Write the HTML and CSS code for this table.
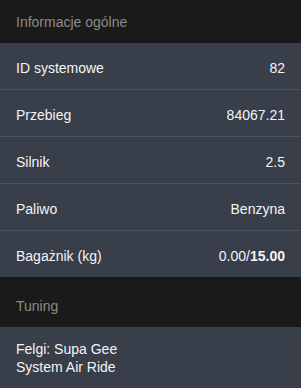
FILE: index.html
```html
<!DOCTYPE html>
<html>
<head>
<meta charset="utf-8">
<link rel="stylesheet" href="styles.css">
</head>
<body>
<div class="panel">
  <div class="section-head">Informacje ogólne</div>
  <div class="row"><span>ID systemowe</span><span>82</span></div>
  <div class="row"><span>Przebieg</span><span>84067.21</span></div>
  <div class="row"><span>Silnik</span><span>2.5</span></div>
  <div class="row"><span>Paliwo</span><span>Benzyna</span></div>
  <div class="row last"><span>Bagażnik (kg)</span><span>0.00/<b>15.00</b></span></div>
  <div class="section-head tuning">Tuning</div>
  <div class="block">Felgi: Supa Gee<br>System Air Ride</div>
</div>
</body>
</html>
```
FILE: styles.css
```css
html, body {
  margin: 0;
  padding: 0;
  background: #383e4a;
}
.panel {
  width: 301px;
  font-family: "Liberation Sans", Arial, sans-serif;
  font-size: 14px;
  line-height: 16px;
  color: #f4f4f4;
}
.section-head {
  background: #1a1a1a;
  color: #8b8b8b;
  height: 43px;
  box-sizing: border-box;
  padding: 14px 16px 0 16px;
}
.section-head.tuning {
  height: 50px;
  padding-top: 21px;
}
.row {
  display: flex;
  justify-content: space-between;
  align-items: center;
  height: 47px;
  box-sizing: border-box;
  padding: 3px 16px 0 16px;
  background: #383e4a;
  border-bottom: 1px solid #4d525c;
}
.row.last {
  height: 46px;
  border-bottom: none;
}
.row b {
  font-weight: bold;
}
.block {
  background: #383e4a;
  padding: 13px 16px 0 16px;
  line-height: 18px;
  height: 61px;
  box-sizing: border-box;
}
```
